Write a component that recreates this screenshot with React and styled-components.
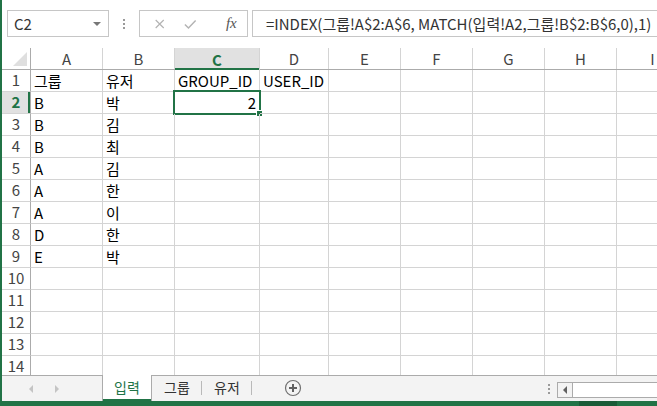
import styled, { createGlobalStyle } from "styled-components";

const GREEN = "#217346";
const GRID = "#d4d4d4";
const HEAD_LINE = "#ababab";
const COLS = "29px 72px 72px 85px 69px 72px 72px 72px 72px 72px";

const Global = createGlobalStyle`
  html, body { margin: 0; padding: 0; background: #fff; }
  body { font-family: "Noto Sans CJK KR", "Noto Sans", sans-serif; }
`;

const Window = styled.div`
  width: 657px;
  height: 406px;
  overflow: hidden;
  border-left: 2px solid ${GREEN};
  box-sizing: border-box;
  display: flex;
  flex-direction: column;
  background: #fff;
`;

// Formula bar
const FormulaBar = styled.div`
  height: 48px;
  flex: none;
  display: flex;
  align-items: flex-start;
  padding: 10px 0 0 5px;
  box-sizing: border-box;
`;
const NameBox = styled.div`
  width: 102px;
  height: 27px;
  box-sizing: border-box;
  border: 1px solid #c6c6c6;
  display: flex;
  align-items: center;
  justify-content: space-between;
  padding: 0 7px 0 6px;
  font-size: 15px;
  color: #333;
`;
const Caret = styled.span`
  width: 0;
  height: 0;
  border-left: 4px solid transparent;
  border-right: 4px solid transparent;
  border-top: 4px solid #777;
`;
const Grip = styled.div`
  width: 30px;
  height: 27px;
  display: flex;
  flex-direction: column;
  align-items: center;
  justify-content: center;
  gap: 2px;
  span {
    width: 2px;
    height: 2px;
    background: #9a9a9a;
  }
`;
const FxBox = styled.div`
  width: 109px;
  height: 27px;
  box-sizing: border-box;
  border: 1px solid #c6c6c6;
  display: flex;
  align-items: center;
  padding-left: 13px;
  margin-right: 4px;
`;
const FxIcon = styled.span`
  width: 35px;
  display: flex;
  justify-content: center;
  font-family: "Liberation Serif", serif;
  font-style: italic;
  font-size: 15px;
  color: #555;
`;
const Input = styled.div`
  flex: 1;
  height: 27px;
  box-sizing: border-box;
  border: 1px solid #c6c6c6;
  border-right: none;
  display: flex;
  align-items: center;
  padding-left: 13px;
  font-size: 15px;
  color: #333;
  white-space: nowrap;
  overflow: hidden;
`;

// Sheet
const Sheet = styled.div`
  height: 327px;
  flex: none;
  overflow: hidden;
`;
const Row = styled.div`
  display: grid;
  grid-template-columns: ${COLS};
  height: ${(p) => p.$h || 22}px;
`;
const HeaderRow = styled(Row)`
  border-bottom: 1px solid ${HEAD_LINE};
  box-sizing: border-box;
`;
const Corner = styled.div`
  border-right: 1px solid ${HEAD_LINE};
  position: relative;
  &::after {
    content: "";
    position: absolute;
    right: 3px;
    bottom: 3px;
    border-left: 14px solid transparent;
    border-bottom: 14px solid #dfdfdf;
  }
`;
const ColHead = styled.div`
  border-right: 1px solid ${GRID};
  display: flex;
  align-items: center;
  justify-content: center;
  font-size: 15px;
  color: ${(p) => (p.$active ? GREEN : "#444")};
  font-weight: ${(p) => (p.$active ? 700 : 400)};
  background: ${(p) => (p.$active ? "#e1e1e1" : "#fff")};
  box-shadow: ${(p) => (p.$active ? `inset 0 -2px 0 ${GREEN}` : "none")};
  margin-bottom: ${(p) => (p.$active ? "-1px" : "0")};
`;
const RowHead = styled.div`
  border-right: 1px solid ${HEAD_LINE};
  border-bottom: 1px solid ${GRID};
  box-sizing: border-box;
  display: flex;
  align-items: flex-start;
  justify-content: center;
  padding-top: 1px;
  font-size: 15px;
  line-height: 18px;
  color: ${(p) => (p.$active ? GREEN : "#444")};
  font-weight: ${(p) => (p.$active ? 700 : 400)};
  background: ${(p) => (p.$active ? "#e1e1e1" : "#fff")};
  box-shadow: ${(p) => (p.$active ? `inset -2px 0 0 ${GREEN}` : "none")};
`;
const Cell = styled.div`
  border-right: 1px solid ${GRID};
  border-bottom: 1px solid ${GRID};
  box-sizing: border-box;
  display: flex;
  align-items: flex-end;
  justify-content: ${(p) => (p.$right ? "flex-end" : "flex-start")};
  padding: 0 3px 1px 3px;
  font-size: 15px;
  line-height: 19px;
  color: #000;
  white-space: nowrap;
  position: relative;
  ${(p) =>
    p.$selected &&
    `
    &::before {
      content: "";
      position: absolute;
      left: -2px;
      top: -2px;
      right: -2px;
      bottom: -2px;
      border: 2px solid ${GREEN};
      pointer-events: none;
    }
    &::after {
      content: "";
      position: absolute;
      right: -4px;
      bottom: -4px;
      width: 5px;
      height: 5px;
      background: ${GREEN};
      border: 1px solid #fff;
    }
  `}
`;

// Sheet tabs
const TabBar = styled.div`
  height: 26px;
  flex: none;
  box-sizing: border-box;
  border-top: 1px solid ${HEAD_LINE};
  background: #f3f3f3;
  display: flex;
  align-items: stretch;
`;
const Nav = styled.div`
  width: 100px;
  display: flex;
  align-items: center;
  padding-left: 27px;
  gap: 22px;
  box-sizing: border-box;
`;
const Arrow = styled.span`
  width: 0;
  height: 0;
  border-top: 4px solid transparent;
  border-bottom: 4px solid transparent;
  ${(p) => (p.$left ? "border-right" : "border-left")}: 4px solid #c4c4c4;
`;
const Tab = styled.div`
  width: 50px;
  box-sizing: border-box;
  display: flex;
  align-items: center;
  justify-content: center;
  font-size: 14px;
  color: ${(p) => (p.$active ? GREEN : "#333")};
  background: ${(p) => (p.$active ? "#fff" : "transparent")};
  margin-top: ${(p) => (p.$active ? "-1px" : "0")};
  border-left: ${(p) => (p.$active ? `1px solid ${HEAD_LINE}` : "none")};
  border-right: ${(p) => (p.$active ? `1px solid ${HEAD_LINE}` : "none")};
  box-shadow: ${(p) => (p.$active ? `inset 0 -2px 0 ${GREEN}` : "none")};
  padding-bottom: 3px;
  position: relative;
  ${(p) =>
    p.$sep &&
    `
    &::after {
      content: "";
      position: absolute;
      right: 0;
      top: 5px;
      height: 14px;
      width: 1px;
      background: #b9b9b9;
    }
  `}
`;
const AddTab = styled.div`
  width: 82px;
  display: flex;
  align-items: center;
  justify-content: center;
  padding-bottom: 2px;
`;
const Spacer = styled.div`
  flex: 1;
`;
const SplitDots = styled.div`
  width: 16px;
  display: flex;
  flex-direction: column;
  align-items: center;
  justify-content: center;
  gap: 2px;
  span {
    width: 2px;
    height: 2px;
    background: #9a9a9a;
  }
`;
const HScroll = styled.div`
  width: 110px;
  margin: 6px -10px 3px 0;
  border: 1px solid ${HEAD_LINE};
  background: #fff;
  display: flex;
  box-sizing: border-box;
`;
const ScrollBtn = styled.div`
  width: 14px;
  border-right: 1px solid ${HEAD_LINE};
  display: flex;
  align-items: center;
  justify-content: center;
  background: #f3f3f3;
`;
const ScrollArrow = styled.span`
  width: 0;
  height: 0;
  border-top: 4px solid transparent;
  border-bottom: 4px solid transparent;
  border-right: 4px solid #606060;
`;

const StatusBar = styled.div`
  flex: 1;
  background: ${GREEN};
  display: flex;
  padding-left: 577px;
  span {
    width: 38px;
    background: #1a5c38;
  }
`;

const letters = ["A", "B", "C", "D", "E", "F", "G", "H", "I"];
const data = [
  ["그룹", "유저", "GROUP_ID", "USER_ID"],
  ["B", "박", "2", ""],
  ["B", "김", "", ""],
  ["B", "최", "", ""],
  ["A", "김", "", ""],
  ["A", "한", "", ""],
  ["A", "이", "", ""],
  ["D", "한", "", ""],
  ["E", "박", "", ""],
];

const App = () => {
  const rows = Array.from({ length: 14 }, (_, i) => i + 1);
  return (
    <>
      <Global />
      <Window>
        <FormulaBar>
          <NameBox>
            C2
            <Caret />
          </NameBox>
          <Grip>
            <span />
            <span />
            <span />
          </Grip>
          <FxBox>
            <svg width="35" height="14" viewBox="0 0 35 14">
              <path d="M3 2.5 L12 11.5 M12 2.5 L3 11.5" stroke="#b3b3b3" strokeWidth="1.3" fill="none" />
            </svg>
            <svg width="35" height="14" viewBox="0 0 35 14">
              <path d="M1 7.5 L5 11.5 L13 3" stroke="#b3b3b3" strokeWidth="1.6" fill="none" />
            </svg>
            <FxIcon>fx</FxIcon>
          </FxBox>
          <Input>=INDEX(그룹!A$2:A$6, MATCH(입력!A2,그룹!B$2:B$6,0),1)</Input>
        </FormulaBar>
        <Sheet>
          <HeaderRow>
            <Corner />
            {letters.map((l) => (
              <ColHead key={l} $active={l === "C"}>
                {l}
              </ColHead>
            ))}
          </HeaderRow>
          {rows.map((r) => {
            const vals = data[r - 1] || [];
            return (
              <Row key={r} $h={r === 14 ? 19 : 22}>
                <RowHead $active={r === 2}>{r}</RowHead>
                {letters.map((l, ci) => (
                  <Cell key={l} $right={r === 2 && ci === 2} $selected={r === 2 && ci === 2}>
                    {vals[ci] || ""}
                  </Cell>
                ))}
              </Row>
            );
          })}
        </Sheet>
        <TabBar>
          <Nav>
            <Arrow $left />
            <Arrow />
          </Nav>
          <Tab $active>입력</Tab>
          <Tab $sep>그룹</Tab>
          <Tab $sep>유저</Tab>
          <AddTab>
            <svg width="18" height="18" viewBox="0 0 18 18">
              <circle cx="9" cy="9" r="7.5" stroke="#707070" strokeWidth="1.2" fill="none" />
              <path d="M9 5 V13 M5 9 H13" stroke="#606060" strokeWidth="2" />
            </svg>
          </AddTab>
          <Spacer />
          <SplitDots>
            <span />
            <span />
            <span />
          </SplitDots>
          <HScroll>
            <ScrollBtn>
              <ScrollArrow />
            </ScrollBtn>
          </HScroll>
        </TabBar>
        <StatusBar>
          <span />
        </StatusBar>
      </Window>
    </>
  );
};

export default App;
